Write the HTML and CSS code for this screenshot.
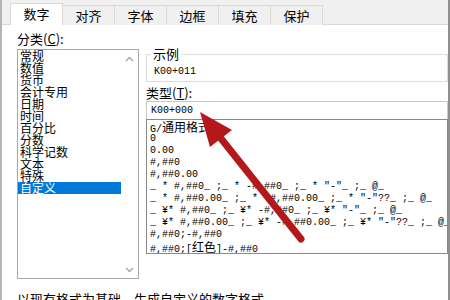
FILE: index.html
```html
<!DOCTYPE html>
<html lang="zh">
<head>
<meta charset="utf-8">
<link rel="stylesheet" href="styles.css">
</head>
<body>
<div class="dialog">
  <div class="tabs">
    <div class="tab active">数字</div>
    <div class="tab">对齐</div>
    <div class="tab">字体</div>
    <div class="tab">边框</div>
    <div class="tab">填充</div>
    <div class="tab">保护</div>
  </div>
  <div class="page">
    <div class="main">
      <div class="left">
        <div class="label">分类(<u>C</u>):</div>
        <div class="catbox">
          <div class="cats">
            <div class="cat">常规</div>
            <div class="cat">数值</div>
            <div class="cat">货币</div>
            <div class="cat">会计专用</div>
            <div class="cat">日期</div>
            <div class="cat">时间</div>
            <div class="cat">百分比</div>
            <div class="cat">分数</div>
            <div class="cat">科学记数</div>
            <div class="cat">文本</div>
            <div class="cat">特殊</div>
            <div class="cat sel">自定义</div>
          </div>
          <div class="scroll">
            <svg width="9" height="6" viewBox="0 0 9 6"><path d="M1 5 L4.5 1.5 L8 5" fill="none" stroke="#a6a6a6" stroke-width="1.4"/></svg>
            <svg width="9" height="6" viewBox="0 0 9 6"><path d="M1 1 L4.5 4.5 L8 1" fill="none" stroke="#a6a6a6" stroke-width="1.4"/></svg>
          </div>
        </div>
      </div>
      <div class="right">
        <fieldset class="sample">
          <legend>示例</legend>
          <div class="sampletext">K00+011</div>
        </fieldset>
        <div class="label typelabel">类型(<u>T</u>):</div>
        <div class="typein">K00+000</div>
        <div class="fmts">
          <div class="fmt">G/<span class="cj">通用格式</span></div>
          <div class="fmt">0</div>
          <div class="fmt">0.00</div>
          <div class="fmt">#,##0</div>
          <div class="fmt">#,##0.00</div>
          <div class="fmt">_ * #,##0_ ;_ * -#,##0_ ;_ * "-"_ ;_ @_ </div>
          <div class="fmt">_ * #,##0.00_ ;_ * -#,##0.00_ ;_ * "-"??_ ;_ @_ </div>
          <div class="fmt">_ ¥* #,##0_ ;_ ¥* -#,##0_ ;_ ¥* "-"_ ;_ @_ </div>
          <div class="fmt">_ ¥* #,##0.00_ ;_ ¥* -#,##0.00_ ;_ ¥* "-"??_ ;_ @_ </div>
          <div class="fmt">#,##0;-#,##0</div>
          <div class="fmt">#,##0;[<span class="cj">红色</span>]-#,##0</div>
        </div>
      </div>
    </div>
    <div class="hint">以现有格式为基础，生成自定义的数字格式。</div>
  </div>
  <svg class="arrow" width="450" height="300" viewBox="0 0 450 300">
    <line x1="219" y1="136" x2="301" y2="239" stroke="#b3181b" stroke-width="7" stroke-linecap="round"/>
    <polygon points="200,112 232,130 210,147" fill="#b3181b"/>
  </svg>
</div>
</body>
</html>
```
FILE: styles.css
```css
* { box-sizing: border-box; }
html, body { margin: 0; padding: 0; }
body {
  width: 450px;
  height: 300px;
  overflow: hidden;
  background: #ffffff;
  font-family: "Noto Sans CJK SC", "Noto Sans", sans-serif;
  color: #000;
}
.dialog {
  position: relative;
  width: 450px;
  height: 300px;
  border-left: 2px solid #b4b4b4;
  border-right: 2px solid #8e8e8e;
  background: #fff;
  overflow: hidden;
}
.tabs {
  display: flex;
  align-items: flex-end;
  height: 25px;
  padding-left: 8px;
  background: #f0f0f0;
  border-bottom: 1px solid #d9d9d9;
}
.tab {
  width: 53px;
  height: 20px;
  margin-right: -1px;
  margin-bottom: -1px;
  border: 1px solid #d9d9d9;
  border-bottom: none;
  background: #f0f0f0;
  font-size: 13px;
  line-height: 19px;
  text-align: center;
}
.tab.active {
  height: 22px;
  background: #fff;
  position: relative;
  z-index: 1;
}
.page { display: flex; flex-direction: column; }
.main { display: flex; padding-top: 6px; }
.left { margin-left: 15px; width: 122px; }
.label { font-size: 13px; line-height: 16px; height: 18px; }
.label u { text-underline-offset: 1px; }
.catbox {
  display: flex;
  width: 122px;
  height: 230px;
  border: 1px solid #a8a8a8;
}
.cats { width: 103px; }
.cat {
  font-size: 12px;
  line-height: 12px;
  height: 12px;
  padding-left: 2px;
  white-space: nowrap;
}
.cat.sel { background: #0078d7; color: #fff; }
.scroll {
  width: 17px;
  display: flex;
  flex-direction: column;
  justify-content: space-between;
  align-items: center;
  padding: 6px 0 5px;
}
.right { margin-left: 7px; width: 302px; }
.sample {
  margin: 16px 0 0 0;
  padding: 0 0 0 4px;
  border: 1px solid #dcdcdc;
  min-width: 0;
}
.sample legend {
  font-size: 13px;
  line-height: 14px;
  padding: 0 2px;
}
.sampletext {
  font-family: "Liberation Mono", "Noto Sans CJK SC", monospace;
  font-size: 10px;
  line-height: 12px;
  padding: 5px 0 3px 3px;
}
.typelabel { margin-top: 3px; height: 16px; }
.typein {
  height: 18px;
  border: 1px solid #c8c8c8;
  border-bottom: none;
  font-family: "Liberation Mono", "Noto Sans CJK SC", monospace;
  font-size: 10px;
  line-height: 12px;
  padding: 3px 0 0 4px;
}
.fmts {
  height: 135px;
  border: 1px solid #8a8a8a;
  padding-top: 1px;
  overflow: hidden;
}
.fmt {
  font-family: "Liberation Mono", "Noto Sans CJK SC", monospace;
  font-size: 10px;
  line-height: 12px;
  height: 12px;
  padding-left: 3px;
  white-space: pre;
}
.cj {
  font-family: "Noto Sans CJK SC", sans-serif;
  font-size: 12px;
  line-height: 12px;
}
.hint {
  margin: 12px 0 0 15px;
  font-size: 13px;
  line-height: 16px;
  white-space: nowrap;
}
.arrow {
  position: absolute;
  left: -2px;
  top: 0;
  pointer-events: none;
}
```
